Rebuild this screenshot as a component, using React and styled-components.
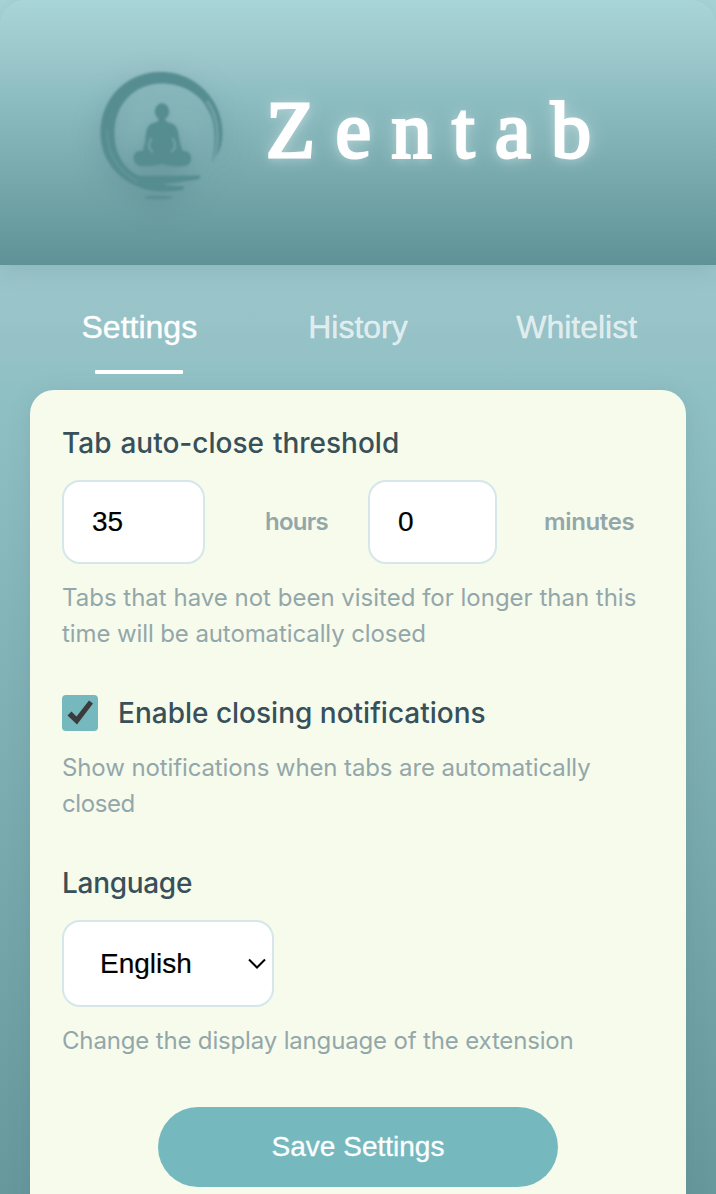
import React, { useState } from "react";
import styled, { createGlobalStyle } from "styled-components";

const sky = "#a8d5d8 0%, #98c3c8 27%, #8fc0c4 33%";

const GlobalStyle = createGlobalStyle`
  *, *::before, *::after { box-sizing: border-box; }
  body { margin: 0; overflow: hidden; }
  button, input, select { font-family: "Liberation Sans", Arial, sans-serif; }
`;

const Popup = styled.div`
  width: 716px;
  height: 1194px;
  overflow: hidden;
  display: flex;
  flex-direction: column;
  background: linear-gradient(180deg, ${sky}, #66989c 100%);
  font-family: Inter, sans-serif;
`;

const Header = styled.header`
  flex: none;
  height: 265px;
  display: flex;
  align-items: flex-start;
  border-radius: 26px 26px 0 0;
  background: linear-gradient(180deg, ${sky}, #5f9296 100%);
  box-shadow: 0 4px 24px rgba(70, 100, 110, 0.18);
`;

const Logo = styled.svg`
  flex: none;
  width: 130px;
  height: 136px;
  margin: 68px 0 0 96px;
  overflow: visible;
  filter: blur(0.8px) drop-shadow(0 8px 14px rgba(60, 95, 100, 0.28));
`;

const Title = styled.h1`
  margin: 82px 0 0 40px;
  font: normal 80px/96px "Liberation Serif", "Times New Roman", serif;
  letter-spacing: 20.6px;
  color: #fff;
  -webkit-text-stroke: 3px #fff;
  text-shadow: 0 0 20px rgba(255, 255, 255, 0.5), 0 2px 10px rgba(255, 255, 255, 0.35);
`;

const Tabs = styled.nav`
  flex: none;
  display: grid;
  grid-template-columns: repeat(3, 1fr);
  height: 125px;
  padding: 30px 30px 16px;
`;

const Tab = styled.button`
  display: flex;
  flex-direction: column;
  align-items: center;
  justify-content: space-between;
  border: 0;
  padding: 13px 0 0;
  background: none;
  font-size: 32px;
  line-height: 38px;
  color: ${(p) => (p.$active ? "#fff" : "rgba(255, 255, 255, 0.7)")};
  -webkit-text-stroke: 0.4px currentColor;

  &::after {
    content: "";
    width: 88px;
    height: 4px;
    border-radius: 1px;
    background: ${(p) => (p.$active ? "#fff" : "transparent")};
  }
`;

const Card = styled.main`
  flex: 1 0 auto;
  display: flex;
  flex-direction: column;
  margin: 0 30px;
  padding: 35px 32px 60px;
  border-radius: 24px 24px 0 0;
  background: #f7fbec;
  box-shadow: 0 4px 24px rgba(70, 100, 110, 0.14);
`;

const Group = styled.section`
  margin-bottom: ${(p) => p.$gap}px;
`;

const Label = styled.label`
  display: block;
  padding-top: 1px;
  font-size: 28px;
  font-weight: 500;
  line-height: 35px;
  letter-spacing: ${(p) => p.$track || 0}px;
  word-spacing: ${(p) => p.$word || 0}px;
  white-space: nowrap;
  color: #37505a;
`;

const Hint = styled.p`
  margin: ${(p) => p.$top || 16}px 0 0;
  font-size: 24px;
  line-height: 36px;
  white-space: nowrap;
  color: #93a7aa;
`;

const HintLine = styled.span`
  display: block;
  letter-spacing: ${(p) => p.$track || 0}px;
`;

const TimeRow = styled.div`
  display: flex;
  align-items: center;
  margin-top: 19px;
`;

const NumberInput = styled.input`
  width: ${(p) => p.$width}px;
  height: 84px;
  padding: 0 28px;
  border: 2px solid #d5e7ea;
  border-radius: 18px;
  background: #fff;
  font-size: 28px;
  color: #000;
  -webkit-text-stroke: 0.2px #000;
`;

const Unit = styled.span`
  width: ${(p) => p.$width}px;
  padding-left: ${(p) => p.$left}px;
  font-size: 24px;
  font-weight: 600;
  line-height: 36px;
  letter-spacing: ${(p) => p.$track || 0}px;
  color: #93a7aa;
`;

const CheckRow = styled.div`
  display: flex;
  align-items: center;
  gap: 20px;
`;

const CheckBox = styled.button`
  width: 36px;
  height: 36px;
  padding: 0;
  border: 0;
  border-radius: 4px;
  background: #75b9bf;

  svg { display: block; }
`;

const SelectBox = styled.button`
  display: flex;
  align-items: center;
  justify-content: space-between;
  width: 212px;
  height: 87px;
  margin-top: 19px;
  padding: 0 6px 0 36px;
  border: 2px solid #d5e7ea;
  border-radius: 18px;
  background: #fff;
  font-size: 28px;
  color: #000;
  -webkit-text-stroke: 0.2px #000;
`;

const SaveButton = styled.button`
  align-self: center;
  width: 400px;
  height: 80px;
  border: 0;
  border-radius: 40px;
  background: #75b9bf;
  font-size: 28px;
  color: #fff;
  -webkit-text-stroke: 0.3px #fff;
`;

function ZenLogo() {
  return (
    <Logo viewBox="96 68 130 136" fill="#568d91">
      <path d="M160 72C180 71.500 200 81 212 99C222 113 226 136 219 151C217 156 214 161 212 161C215 147 217 124 208 110C200 93 181 83.500 162 83.500C134 83.500 114.500 105 114.500 133C114.500 154 124 168 138 175.500C144 176.500 184 175 200 175.500C201 178 199 179.500 194 180C182 182 170 183 162 184C170 186 176 186 182 186C186 187 184 190 179 190.500C164 193 148 191 139 187C117 179 101 159 100.500 134C100 99 126 72 160 72Z" />
      <path d="M107 130C107 155 120 172 138 182" fill="none" stroke="#80aeb2" strokeWidth="1.300" opacity=".4" />
      <path d="M207 101C218 116 220 137 214 160" fill="none" stroke="#80aeb2" strokeWidth="3" opacity=".6" />
      <path d="M143 197.500C147 195 169 195 173 197.500C168 200 149 200 143 197.500Z" opacity=".85" />
      <ellipse cx="162" cy="111.500" rx="7.300" ry="8.300" />
      <path d="M159 118H165C165 122 168 122 173 124C180 128 178 140 182 149C183 153 179 156 173 156H151C145 156 142 152 143.500 148C147 139 144 128 151 124C156 122 159 122 159 118Z" />
      <path d="M140 151C148 150 156 155 162 155C168 155 176 150 184 151C191 151 194 160 188 165C180 168 168 166 162 164C154 166 143 168 137 165C131 160 133 151 140 151Z" />
      <path d="M151.500 138C148 144 148 149 153 152M172.500 138C176 144 176 149 171 152" fill="none" stroke="#79a9ad" strokeWidth="2" opacity=".8" />
    </Logo>
  );
}

export default function App() {
  const [tab, setTab] = useState("Settings");
  const [checked, setChecked] = useState(true);
  return (
    <>
      <GlobalStyle />
      <Popup>
        <Header>
          <ZenLogo />
          <Title>Zentab</Title>
        </Header>
        <Tabs>
          {["Settings", "History", "Whitelist"].map((name) => (
            <Tab key={name} $active={tab === name} onClick={() => setTab(name)}>
              {name}
            </Tab>
          ))}
        </Tabs>
        <Card>
          <Group $gap={43}>
            <Label $word={1.5}>Tab auto-close threshold</Label>
            <TimeRow>
              <NumberInput $width={143} defaultValue="35" />
              <Unit $width={163} $left={60} $track={-0.75}>hours</Unit>
              <NumberInput $width={129} defaultValue="0" />
              <Unit $width={150} $left={47} $track={-0.35}>minutes</Unit>
            </TimeRow>
            <Hint>
              <HintLine>Tabs that have not been visited for longer than this</HintLine>
              <HintLine $track={-0.1}>time will be automatically closed</HintLine>
            </Hint>
          </Group>
          <Group $gap={43}>
            <CheckRow>
              <CheckBox role="checkbox" aria-checked={checked} onClick={() => setChecked(!checked)}>
                {checked && (
                  <svg width="36" height="36" viewBox="0 0 36 36" fill="#3b3b3b">
                    <path d="M5.500 20.500L9.500 16.500L14.500 21.500L27 5.500L31 8.500L15 29.500Z" />
                  </svg>
                )}
              </CheckBox>
              <Label>Enable closing notifications</Label>
            </CheckRow>
            <Hint $top={19}>
              <HintLine $track={-0.11}>Show notifications when tabs are automatically</HintLine>
              <HintLine $track={-0.4}>closed</HintLine>
            </Hint>
          </Group>
          <Group $gap={48}>
            <Label $track={-0.3}>Language</Label>
            <SelectBox>
              English
              <svg width="18" height="12" viewBox="0 0 18 12" fill="none" stroke="#000" strokeWidth="2">
                <path d="M1 1.500L9 9.500L17 1.500" />
              </svg>
            </SelectBox>
            <Hint>
              <HintLine $track={-0.16}>Change the display language of the extension</HintLine>
            </Hint>
          </Group>
          <SaveButton>Save Settings</SaveButton>
        </Card>
      </Popup>
    </>
  );
}
